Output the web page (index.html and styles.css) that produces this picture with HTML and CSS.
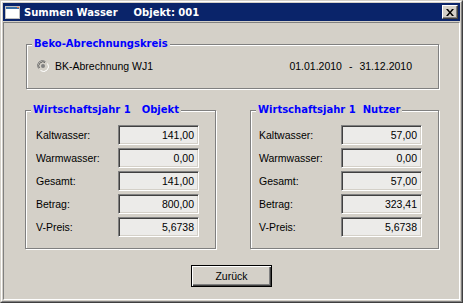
FILE: index.html
```html
<!DOCTYPE html>
<html lang="de">

<head>
  <meta charset="UTF-8" />
  <title>Summen Wasser</title>
  <link rel="stylesheet" href="styles.css">
</head>

<body>
  <div class="window">
    <div class="frame">
      <div class="titlebar">
        <svg class="app-icon" width="15" height="13" viewBox="0 0 15 13">
          <rect x="0" y="0" width="15" height="13" fill="#fff" />
          <rect x="0" y="0" width="15" height="3" fill="#3a6ea5" />
          <rect x="12" y="1" width="2" height="1" fill="#e8703a" />
          <rect x="0.5" y="0.5" width="14" height="12" fill="none" stroke="#c0c0c0" stroke-width="1" />
        </svg>
        <span class="title">Summen Wasser</span>
        <span class="title title-obj">Objekt: 001</span>
        <span class="close-btn">
          <svg width="8" height="7" viewBox="0 0 8 7">
            <path d="M0 0h2l2 2.5L6 0h2L5 3.5 8 7H6L4 4.5 2 7H0l3-3.5z" fill="#000" />
          </svg>
        </span>
      </div>

      <div class="client">
        <!-- Abrechnungskreis -->
        <fieldset class="group group-kreis">
          <legend>Beko-Abrechnungskreis</legend>
          <div class="kreis-row">
            <svg class="radio" width="12" height="12" viewBox="0 0 12 12">
              <path d="M1.5 8.5A5 5 0 0 1 8.5 1.5" fill="none" stroke="#808080" />
              <path d="M2.5 8A4 4 0 0 1 8 2.5" fill="none" stroke="#404040" />
              <path d="M3.5 10.5A5 5 0 0 0 10.5 3.5" fill="none" stroke="#fff" />
              <circle cx="6" cy="6" r="3.6" fill="#d4d0c8" />
              <circle cx="6" cy="6" r="2" fill="#808080" />
            </svg>
            <span class="radio-label">BK-Abrechnung WJ1</span>
            <span class="zeitraum">01.01.2010<span class="dash">-</span>31.12.2010</span>
          </div>
        </fieldset>

        <div class="groups">
          <fieldset class="group group-objekt">
            <legend>Wirtschaftsjahr 1<span class="legend-gap"></span>Objekt</legend>
            <div class="werte">
              <span class="lbl">Kaltwasser:</span><span class="feld">141,00</span>
              <span class="lbl">Warmwasser:</span><span class="feld">0,00</span>
              <span class="lbl">Gesamt:</span><span class="feld">141,00</span>
              <span class="lbl">Betrag:</span><span class="feld">800,00</span>
              <span class="lbl">V-Preis:</span><span class="feld">5,6738</span>
            </div>
          </fieldset>

          <fieldset class="group group-nutzer">
            <legend>Wirtschaftsjahr 1<span class="legend-gap small"></span>Nutzer</legend>
            <div class="werte">
              <span class="lbl">Kaltwasser:</span><span class="feld">57,00</span>
              <span class="lbl">Warmwasser:</span><span class="feld">0,00</span>
              <span class="lbl">Gesamt:</span><span class="feld">57,00</span>
              <span class="lbl">Betrag:</span><span class="feld">323,41</span>
              <span class="lbl">V-Preis:</span><span class="feld">5,6738</span>
            </div>
          </fieldset>
        </div>

        <div class="actions">
          <button class="btn">Zurück</button>
        </div>
      </div>
    </div>
  </div>
</body>

</html>
```

FILE: styles.css
```css
body {
  margin: 0;
  background: #d4d0c8;
  font-family: 'Liberation Sans', Arial, sans-serif;
  font-size: 10.5px;
  color: #000;
}

.window {
  width: 463px;
  height: 303px;
  box-sizing: border-box;
  border: 1px solid;
  border-color: #d4d0c8 #404040 #404040 #d4d0c8;
}

.frame {
  height: 100%;
  box-sizing: border-box;
  border: 1px solid;
  border-color: #fff #808080 #808080 #fff;
  padding: 1px;
  display: flex;
  flex-direction: column;
}

/* Titelleiste */
.titlebar {
  height: 18px;
  background: #0a246a;
  display: flex;
  align-items: center;
  padding: 0 2px 0 2px;
  margin-bottom: 1px;
}

.app-icon {
  margin-right: 4px;
}

.title {
  font-family: 'DejaVu Sans', Verdana, sans-serif;
  font-weight: bold;
  font-size: 10px;
  color: #fff;
}

.title-obj {
  margin-left: 16px;
}

.close-btn {
  margin-left: auto;
  width: 16px;
  height: 14px;
  box-sizing: border-box;
  background: #d4d0c8;
  border: 1px solid;
  border-color: #fff #404040 #404040 #fff;
  box-shadow: inset -1px -1px #808080;
  display: flex;
  align-items: center;
  justify-content: center;
  padding-right: 1px;
}

/* Arbeitsbereich */
.client {
  flex: 1;
  border: 1px solid;
  border-color: #808080 #fff #fff #808080;
  padding: 15px 0 0 0;
}

.group {
  margin: 0;
  padding: 0;
  min-width: 0;
  box-sizing: border-box;
  border: 1px solid #808080;
  box-shadow: inset 1px 1px #fff, 1px 1px #fff;
}

.group legend {
  font-family: 'DejaVu Sans', Verdana, sans-serif;
  font-weight: bold;
  font-size: 10px;
  line-height: 12px;
  color: #0000ff;
  padding: 0 2px;
  margin-left: 5px;
  background: #d4d0c8;
}

.legend-gap {
  display: inline-block;
  width: 11px;
}

.legend-gap.small {
  width: 7px;
}

.group-kreis {
  margin-left: 22px;
  width: 413px;
  height: 51px;
  padding-top: 9px;
}

.kreis-row {
  display: flex;
  align-items: center;
  height: 14px;
  padding-left: 10px;
}

.radio-label {
  margin-left: 6px;
}

.zeitraum {
  margin-left: auto;
  margin-right: 26px;
}

.dash {
  margin: 0 7px;
}

.groups {
  display: flex;
  margin-top: 15px;
  margin-left: 21px;
}

.group-objekt {
  width: 191px;
  height: 145px;
  padding-top: 9px;
}

.group-objekt .werte {
  margin-left: 10px;
}

.group-nutzer {
  width: 189px;
  height: 145px;
  margin-left: 34px;
  padding-top: 9px;
}

.group-nutzer .werte {
  margin-left: 8px;
}

.werte {
  display: grid;
  grid-template-columns: 82px 81px;
  grid-auto-rows: 20px;
  row-gap: 3px;
  align-items: center;
}

.feld {
  height: 20px;
  box-sizing: border-box;
  background: #ecebe9;
  border: 1px solid;
  border-color: #808080 #fff #fff #808080;
  box-shadow: inset 1px 1px #404040, inset -1px -1px #d4d0c8;
  text-align: right;
  padding: 0 4px 0 0;
  line-height: 18px;
}

.actions {
  display: flex;
  justify-content: center;
  margin-top: 16px;
}

.btn {
  width: 81px;
  height: 22px;
  box-sizing: border-box;
  font-family: 'Liberation Sans', Arial, sans-serif;
  font-size: 10.5px;
  color: #000;
  background: #d4d0c8;
  border: 1px solid #000;
  box-shadow: inset 1px 1px #fff, inset -1px -1px #404040, inset -2px -2px #808080;
  padding: 0;
}
```
